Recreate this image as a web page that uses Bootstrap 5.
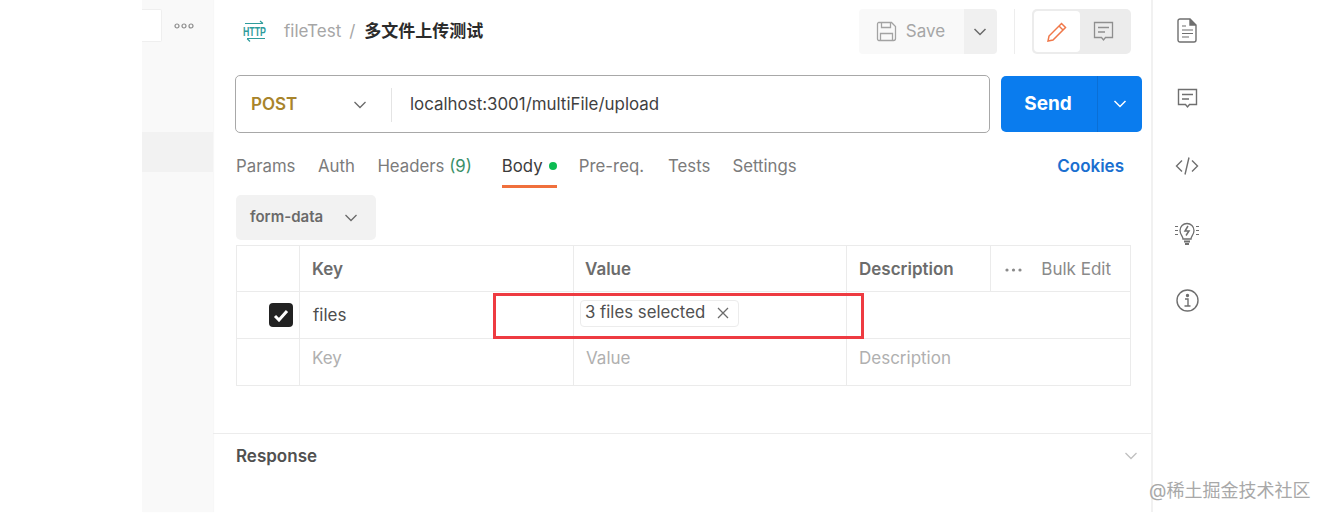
<!DOCTYPE html>
<html lang="zh">
<head>
<meta charset="utf-8">
<title>fileTest</title>
<link href="https://cdn.jsdelivr.net/npm/bootstrap@5.3.0/dist/css/bootstrap.min.css" rel="stylesheet">
<style>
html,body{height:517px;overflow:hidden;background:#fff;}
body{font-family:Inter,"Noto Sans CJK SC",sans-serif;font-size:17px;color:#6b6b6b;position:relative;}
.shell{height:512px;margin-left:142px;width:1079px;}
.side-rail{width:71px;background:#f9f9f9;box-shadow:1px 0 1px rgba(0,0,0,.03);padding-top:9px;flex:none;}
.side-top{height:33px;padding-left:32px;}
.side-box{width:20px;height:33px;background:#fff;border:1px solid #efefef;border-left:0;border-radius:0 2px 2px 0;margin-left:-32px;}
.side-dots{margin-left:12px;margin-top:1px;}
.side-active{height:40px;background:#f2f2f2;margin-top:90px;}
.work{width:940px;flex:none;border-right:2px solid #f1f1f1;}
.head-row{height:62px;padding:9px 20px 0 29px;}
.crumb-wrap{height:45px;}
.http-icon{overflow:visible;}
.http-label{font-family:"Liberation Sans",sans-serif;font-size:12.5px;font-weight:700;fill:#2f9c9c;}
.crumb-muted{color:#a6a6a6;margin-left:16px;}
.crumb-sep{color:#a6a6a6;margin:0 9px 0 8px;}
.crumb-title{color:#2b2b2b;font-size:17px;font-weight:700;}
.save-group{height:45px;width:138px;border-radius:4px;overflow:hidden;}
.save-main{width:105px;background:#f9f9f9;color:#a6a6a6;gap:9px;padding-right:2px;}
.save-drop{width:33px;background:#f0f0f0;padding-right:1px;}
.v-rule{width:1px;height:45px;background:#ededed;margin:0 17px;}
.mode-group{width:99px;height:45px;background:#ececec;border-radius:5px;padding:2px;}
.mode-on{width:46px;height:41px;background:#fff;border-radius:4px;}
.mode-off{width:46px;height:41px;}
.url-row{padding:13px 8px 0 22px;gap:11px;height:71px;}
.url-box{width:755px;height:58px;border:1px solid #a8a8a8;border-radius:5px;flex:none;padding-top:1px;}
.verb{width:156px;height:34px;padding:0 24px 0 15px;border-right:1px solid #e4e4e4;color:#a8842b;font-weight:600;}
.url-text{padding-left:18px;color:#3f3f3f;font-size:16.9px;}
.send{width:141px;height:56px;background:#0a7cee;color:#fff;border-radius:5px;margin-top:1px;overflow:hidden;flex:none;}
.send-main{width:96px;font-weight:700;font-size:19px;padding:1px 2px 0 0;}
.send-drop{width:45px;border-left:1px solid #0a6fd6;}
.tabs-row{padding:0 27px 0 23px;height:62px;}
.tab-item{color:#7b7b7b;font-size:16.8px;height:55px;line-height:24px;padding-top:21px;margin-right:22.5px;white-space:nowrap;}
.tab-on{color:#3c3c3c;width:55px;margin-right:22px;border-bottom:3px solid #f0703c;}
.tab-gap{margin-right:30px;}
.tab-wide{margin-right:24px;}
.tab-tests{margin-right:22px;}
.count{color:#3a8f68;}
.dot{display:inline-block;width:8px;height:8px;background:#0cbb52;border-radius:50%;margin-left:6px;vertical-align:2px;}
.cookies{color:#1a6fd0;font-weight:600;margin-left:auto;padding-top:21px;line-height:24px;}
.body-pick{margin-left:23px;width:140px;height:45px;background:#f2f2f2;border-radius:5px;padding:0 18px 0 14px;color:#6a6a6a;font-weight:600;font-size:15px;}
.param-grid{border-collapse:collapse;margin:5px 0 0 23px;width:894px;table-layout:fixed;}
.param-grid td{border:1px solid #ebebeb;padding:0 12px;vertical-align:middle;}
.param-grid tr{height:47px;}
.param-grid tr.first{height:46px;}
.param-grid tr.first td{padding-top:2px;}
.c-check{width:63px;}.c-key{width:274px;}.c-val{width:273px;}.c-desc{width:144px;}.c-bulk{width:140px;}
.param-grid td.ph-cell{padding-bottom:7px;}
.param-grid td.nudge{padding-left:13px;padding-top:2px;}
.param-grid td.val-cell{padding-left:11px;}
.th-text{color:#6c6c6c;font-weight:600;}
.ph{color:#b0b0b0;}
.val-text{color:#4d4d4d;}
.file-chip{display:flex;align-items:center;border:1px solid #ececec;border-radius:4px;height:27px;width:159px;padding-left:4px;color:#505050;font-size:16.8px;margin:-4px 0 0 -5px;gap:12px;}
.check-box{width:24px;height:24px;background:#222;border-radius:4px;margin-left:32px;}
.bulk{color:#8a8a8a;}
.bulk-row{padding:0 7px 0 2px;}
.resp-bar{margin-top:47px;border-top:1px solid #ececec;height:79px;padding:10px 13px 0 23px;}
.resp-title{color:#505050;font-weight:600;}
.tool-rail{width:68px;flex:none;margin-top:-3px;}
.tool-slot{height:67.5px;}
.red-mark{position:absolute;left:493px;top:293px;width:371px;height:46px;border:3px solid #ee3b41;pointer-events:none;}
.mark-text{position:absolute;left:1149px;top:480px;color:#a8a8a8;font-size:18px;line-height:22px;white-space:nowrap;}
</style>
</head>
<body>
<div class="shell d-flex">
  <div class="side-rail">
    <div class="side-top d-flex align-items-center">
      <div class="side-box"></div>
      <svg class="side-dots" width="20" height="6" viewBox="0 0 20 6" fill="none" stroke="#8c8c8c" stroke-width="1.2"><circle cx="3" cy="3" r="2"/><circle cx="10" cy="3" r="2"/><circle cx="17" cy="3" r="2"/></svg>
    </div>
    <div class="side-active"></div>
  </div>

  <div class="work">
    <div class="head-row d-flex align-items-start">
      <div class="crumb-wrap d-flex align-items-center">
        <svg class="http-icon" width="26" height="24" viewBox="0 0 26 24" fill="none" stroke="#2f9c9c" stroke-width="1.2"><path d="M3 3.500h18M18 1l3 2.500"/><path d="M23 18.500H5M8 21.500l-3-3"/><text class="http-label" x="1" y="15.500" textLength="23" lengthAdjust="spacingAndGlyphs" stroke="none">HTTP</text></svg>
        <span class="crumb-muted">fileTest</span><span class="crumb-sep">/</span><span class="crumb-title">多文件上传测试</span>
      </div>
      <div class="d-flex ms-auto align-items-center">
        <div class="save-group d-flex">
          <div class="save-main d-flex align-items-center justify-content-center">
            <svg width="21" height="21" viewBox="0 0 21 21" fill="none" stroke="#a3a3a3" stroke-width="1.300"><path d="M2.500 1.500h13l4 4v12a2 2 0 0 1-2 2h-15a1.500 1.500 0 0 1-1-1.500v-15a1.500 1.500 0 0 1 1-1.500z"/><path d="M5.500 1.500v5h9v-5M4.500 19.500v-7h12v7"/></svg>
            <span>Save</span>
          </div>
          <div class="save-drop d-flex align-items-center justify-content-center">
            <svg width="14" height="8" viewBox="0 0 14 8" fill="none" stroke="#6a6a6a" stroke-width="1.500"><path d="M1.500 1l5.500 5.500L12.500 1"/></svg>
          </div>
        </div>
        <div class="v-rule"></div>
        <div class="mode-group d-flex">
          <div class="mode-on d-flex align-items-center justify-content-center">
            <svg width="22" height="22" viewBox="0 0 22 22" fill="none" stroke="#f0784a" stroke-width="1.500"><path d="M15.500 2.500l4 4L7 19l-5 1 1-5z"/><path d="M13 5l4 4"/></svg>
          </div>
          <div class="mode-off d-flex align-items-center justify-content-center">
            <svg width="21" height="21" viewBox="0 0 21 21" fill="none" stroke="#8f8f8f" stroke-width="1.300"><path d="M1.500 1.500h18v15h-7l-2 2.500-2-2.500h-7z"/><path d="M5 6.500h11M5 11h7"/></svg>
          </div>
        </div>
      </div>
    </div>

    <div class="url-row d-flex align-items-start">
      <div class="url-box d-flex align-items-center">
        <div class="verb d-flex align-items-center justify-content-between">
          <span>POST</span>
          <svg width="14" height="8" viewBox="0 0 14 8" fill="none" stroke="#6a6a6a" stroke-width="1.300"><path d="M1.500 1l5.500 5.500L12.500 1"/></svg>
        </div>
        <div class="url-text">localhost:3001/multiFile/upload</div>
      </div>
      <div class="send d-flex">
        <div class="send-main d-flex align-items-center justify-content-center">Send</div>
        <div class="send-drop d-flex align-items-center justify-content-center">
          <svg width="14" height="8" viewBox="0 0 14 8" fill="none" stroke="#fff" stroke-width="1.500"><path d="M1.500 1l5.500 5.500L12.500 1"/></svg>
        </div>
      </div>
    </div>

    <div class="tabs-row d-flex align-items-start">
      <div class="tab-item">Params</div>
      <div class="tab-item">Auth</div>
      <div class="tab-item tab-gap">Headers <span class="count">(9)</span></div>
      <div class="tab-item tab-on">Body<span class="dot"></span></div>
      <div class="tab-item tab-wide">Pre-req.</div>
      <div class="tab-item tab-tests">Tests</div>
      <div class="tab-item">Settings</div>
      <div class="cookies">Cookies</div>
    </div>

    <div class="body-pick d-flex align-items-center justify-content-between">
      <span>form-data</span>
      <svg width="14" height="8" viewBox="0 0 14 8" fill="none" stroke="#6a6a6a" stroke-width="1.300"><path d="M1.500 1l5.500 5.500L12.500 1"/></svg>
    </div>

    <table class="param-grid">
      <colgroup><col class="c-check"><col class="c-key"><col class="c-val"><col class="c-desc"><col class="c-bulk"></colgroup>
      <tr class="first">
        <td></td>
        <td><span class="th-text">Key</span></td>
        <td class="val-cell"><span class="th-text">Value</span></td>
        <td><span class="th-text">Description</span></td>
        <td>
          <div class="bulk-row d-flex align-items-center justify-content-between">
            <svg width="17" height="4" viewBox="0 0 17 4" fill="#8a8a8a"><circle cx="2" cy="2" r="1.600"/><circle cx="8.500" cy="2" r="1.600"/><circle cx="15" cy="2" r="1.600"/></svg>
            <span class="bulk">Bulk Edit</span>
          </div>
        </td>
      </tr>
      <tr>
        <td class="p-0">
          <div class="check-box d-flex align-items-center justify-content-center">
            <svg width="16" height="13" viewBox="0 0 16 13" fill="none" stroke="#fff" stroke-width="3"><path d="M2 7l4 4 8-9"/></svg>
          </div>
        </td>
        <td class="nudge"><span class="val-text">files</span></td>
        <td class="val-cell"><span class="file-chip">3 files selected
          <svg width="12" height="12" viewBox="0 0 12 12" fill="none" stroke="#6b6b6b" stroke-width="1.300"><path d="M1 1l10 10M11 1L1 11"/></svg></span></td>
        <td colspan="2"></td>
      </tr>
      <tr>
        <td></td>
        <td class="ph-cell"><span class="ph">Key</span></td>
        <td class="ph-cell"><span class="ph">Value</span></td>
        <td class="ph-cell" colspan="2"><span class="ph">Description</span></td>
      </tr>
    </table>

    <div class="resp-bar d-flex align-items-start justify-content-between">
      <span class="resp-title">Response</span>
      <svg class="mt-2" width="14" height="8" viewBox="0 0 14 8" fill="none" stroke="#c0c0c0" stroke-width="1.300"><path d="M1.500 1l5.500 5.500L12.500 1"/></svg>
    </div>
  </div>

  <div class="tool-rail">
    <div class="tool-slot d-flex align-items-center justify-content-center"><svg width="20" height="25" viewBox="0 0 20 25" fill="none" stroke="#6f6f6f" stroke-width="1.400"><path d="M3 1h10l6 6v15a2 2 0 0 1-2 2H3a2 2 0 0 1-2-2V3a2 2 0 0 1 2-2z"/><path d="M13 1v6h6" fill="#6f6f6f"/><path d="M5 8h4M5 12h11M5 15.500h11M5 19h7" stroke-width="1.200"/></svg></div>
    <div class="tool-slot d-flex align-items-center justify-content-center"><svg width="21" height="21" viewBox="0 0 21 21" fill="none" stroke="#6f6f6f" stroke-width="1.400"><path d="M1.500 1.500h18v15h-7l-2 2.500-2-2.500h-7z"/><path d="M5 6.500h11M5 11h7"/></svg></div>
    <div class="tool-slot d-flex align-items-center justify-content-center"><svg width="24" height="20" viewBox="0 0 24 20" fill="none" stroke="#6f6f6f" stroke-width="1.400"><path d="M7 4.500L1.500 10 7 15.500M17 4.500l5.500 5.500-5.500 5.500M14 1.500l-4 17"/></svg></div>
    <div class="tool-slot d-flex align-items-center justify-content-center"><svg width="24" height="25" viewBox="0 0 24 25" fill="none" stroke="#6f6f6f" stroke-width="1.300"><path d="M8 18c0-3-3-4-3-8.500a7 7 0 0 1 14 0C19 14 16 15 16 18z"/><path d="M9 20.500h6M10 23h4" stroke-width="1.800"/><path d="M13 5l-3 5h4l-3 4.500" stroke-width="1.500"/><path d="M0 5.500h3M0 9.500h3M0 13.500h3M21 5.500h3M21 9.500h3M21 13.500h3" stroke-width="1"/></svg></div>
    <div class="tool-slot d-flex align-items-center justify-content-center"><svg width="23" height="23" viewBox="0 0 23 23" fill="none" stroke="#6f6f6f" stroke-width="1.400"><circle cx="11.500" cy="11.500" r="10.500"/><path d="M9 10h3v7M8.500 17h6"/><circle cx="11.500" cy="6.500" r="1" fill="#6f6f6f"/></svg></div>
  </div>
</div>

<div class="red-mark"></div>
<div class="mark-text">@稀土掘金技术社区</div>

<script src="https://cdn.jsdelivr.net/npm/bootstrap@5.3.0/dist/js/bootstrap.bundle.min.js"></script>
</body>
</html>
